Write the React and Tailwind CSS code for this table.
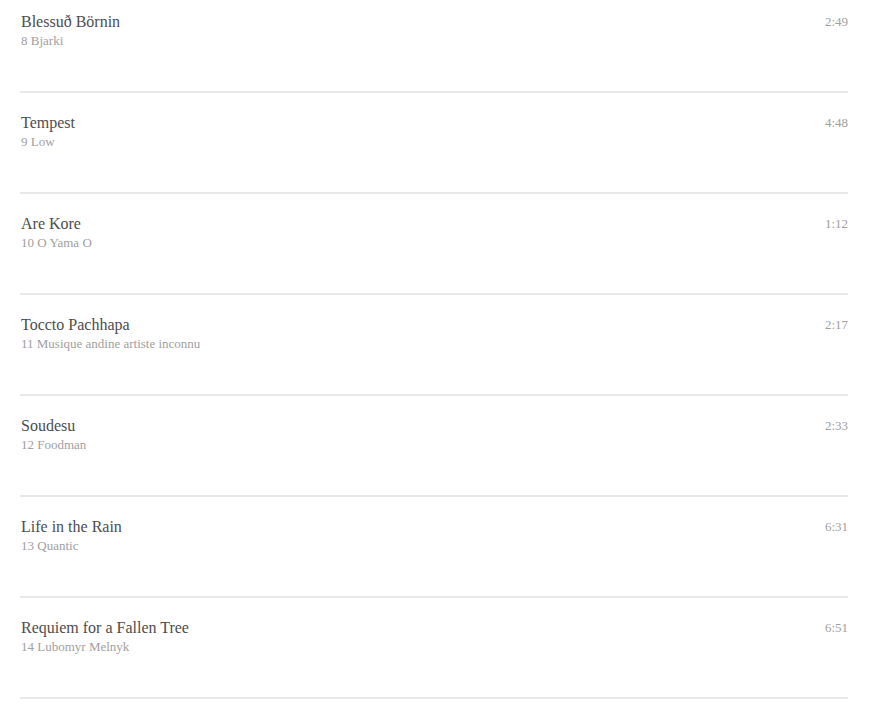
const tracks = [
  { title: "Blessuð Börnin", sub: "8 Bjarki", time: "2:49" },
  { title: "Tempest", sub: "9 Low", time: "4:48" },
  { title: "Are Kore", sub: "10 O Yama O", time: "1:12" },
  { title: "Toccto Pachhapa", sub: "11 Musique andine artiste inconnu", time: "2:17" },
  { title: "Soudesu", sub: "12 Foodman", time: "2:33" },
  { title: "Life in the Rain", sub: "13 Quantic", time: "6:31" },
  { title: "Requiem for a Fallen Tree", sub: "14 Lubomyr Melnyk", time: "6:51" },
];

export default function App() {
  return (
    <div className="w-full h-[707px] overflow-hidden bg-white font-['Liberation_Serif',serif]">
      <ul className="pl-5 pr-[25px]">
        {tracks.map((t) => (
          <li
            key={t.title}
            className="flex justify-between items-start pt-[21px] first:pt-[13px] pb-[42px] border-b-2 border-[#e8e8e8]"
          >
            <div className="flex flex-col pl-px">
              <span className="text-[16px] leading-[18px] text-[#4d4d4d]">{t.title}</span>
              <span className="text-[13px] leading-[16px] mt-[2px] text-[#a0a0a0]">{t.sub}</span>
            </div>
            <span className="text-[13px] leading-[16px] mt-px text-[#a0a0a0]">{t.time}</span>
          </li>
        ))}
      </ul>
    </div>
  );
}
